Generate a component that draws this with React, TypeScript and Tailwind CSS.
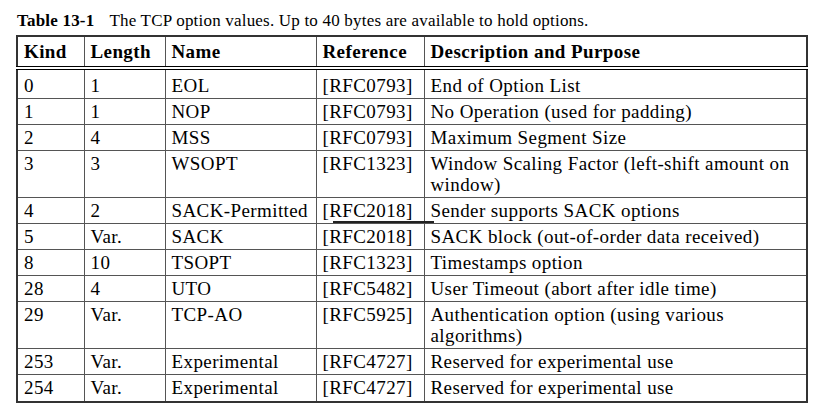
const rows: { kind: string; len: string; name: string; ref: string; desc: string }[] = [
  { kind: "0", len: "1", name: "EOL", ref: "[RFC0793]", desc: "End of Option List" },
  { kind: "1", len: "1", name: "NOP", ref: "[RFC0793]", desc: "No Operation (used for padding)" },
  { kind: "2", len: "4", name: "MSS", ref: "[RFC0793]", desc: "Maximum Segment Size" },
  { kind: "3", len: "3", name: "WSOPT", ref: "[RFC1323]", desc: "Window Scaling Factor (left-shift amount on window)" },
  { kind: "4", len: "2", name: "SACK-Permitted", ref: "[RFC2018]", desc: "Sender supports SACK options" },
  { kind: "5", len: "Var.", name: "SACK", ref: "[RFC2018]", desc: "SACK block (out-of-order data received)" },
  { kind: "8", len: "10", name: "TSOPT", ref: "[RFC1323]", desc: "Timestamps option" },
  { kind: "28", len: "4", name: "UTO", ref: "[RFC5482]", desc: "User Timeout (abort after idle time)" },
  { kind: "29", len: "Var.", name: "TCP-AO", ref: "[RFC5925]", desc: "Authentication option (using various algorithms)" },
  { kind: "253", len: "Var.", name: "Experimental", ref: "[RFC4727]", desc: "Reserved for experimental use" },
  { kind: "254", len: "Var.", name: "Experimental", ref: "[RFC4727]", desc: "Reserved for experimental use" },
];

const cell = "border border-[#555] px-[6px] align-top text-left";
const head = "border border-[#555] border-b-4 border-double border-b-black px-[6px] font-bold align-middle text-left";

export default function App() {
  return (
    <div
      className="w-[827px] h-[412px] bg-white text-black pt-[10px] pl-[16px] leading-[21px]"
      style={{ fontFamily: '"Liberation Serif", "Times New Roman", serif' }}
    >
      <p className="text-[17px] tracking-[0.2px] pl-px mb-[4px]">
        <span className="font-bold">Table 13-1</span>
        <span className="ml-[15px]">The TCP option values. Up to 40 bytes are available to hold options.</span>
      </p>
      <table className="table-fixed border-collapse border-2 border-[#333] w-[790px] text-[19px] tracking-[0.4px]">
        <colgroup>
          <col className="w-[67px]" />
          <col className="w-[81px]" />
          <col className="w-[151px]" />
          <col className="w-[108px]" />
          <col className="w-[383px]" />
        </colgroup>
        <thead>
          <tr className="h-[32px]">
            <th className={head}>Kind</th>
            <th className={head}>Length</th>
            <th className={head}>Name</th>
            <th className={head}>Reference</th>
            <th className={head}>Description and Purpose</th>
          </tr>
        </thead>
        <tbody>
          {rows.map((r, i) => {
            const pad = i === 0 ? "pt-[5px] pb-[2px]" : "py-[2px]";
            const h = i === 0 ? "h-[29px]" : i === rows.length - 1 ? "h-[27px]" : "h-[26px]";
            return (
              <tr key={i} className={h}>
                <td className={`${cell} ${pad}`}>{r.kind}</td>
                <td className={`${cell} ${pad}`}>{r.len}</td>
                <td className={`${cell} ${pad}`}>{r.name}</td>
                <td className={`${cell} ${pad} relative`}>
                  {r.ref}
                  {i === 4 && <span className="absolute left-[16px] right-[-10px] bottom-[0px] h-[2px] bg-[#222]" />}
                </td>
                <td className={`${cell} ${pad}`}>{r.desc}</td>
              </tr>
            );
          })}
        </tbody>
      </table>
    </div>
  );
}
